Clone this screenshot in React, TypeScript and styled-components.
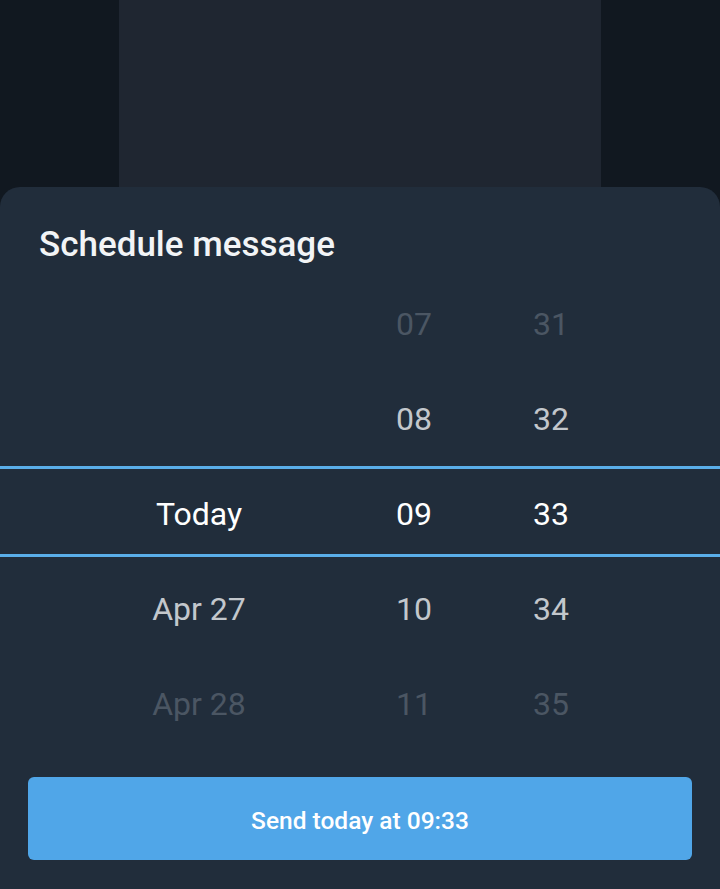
import React from 'react';
import styled, { createGlobalStyle } from 'styled-components';

const GlobalStyle = createGlobalStyle`
  html, body {
    margin: 0;
    padding: 0;
    background: #111820;
  }
  * { box-sizing: border-box; }
`;

type Tone = 'far' | 'near' | 'active';

const dates: [string, Tone][] = [
  ['', 'far'],
  ['', 'near'],
  ['Today', 'active'],
  ['Apr 27', 'near'],
  ['Apr 28', 'far'],
];
const hours: [string, Tone][] = [
  ['07', 'far'],
  ['08', 'near'],
  ['09', 'active'],
  ['10', 'near'],
  ['11', 'far'],
];
const minutes: [string, Tone][] = [
  ['31', 'far'],
  ['32', 'near'],
  ['33', 'active'],
  ['34', 'near'],
  ['35', 'far'],
];

const App: React.FC = () => {
  return (
    <Page>
      <GlobalStyle />
      <Backdrop>
        <Chat />
      </Backdrop>
      <Sheet>
        <Title>Schedule message</Title>
        <Picker>
          <Selection />
          <Column $width={398}>
            {dates.map(([t, tone], i) => (
              <Cell key={i} $tone={tone}>{t}</Cell>
            ))}
          </Column>
          <Column $width={32}>
            {hours.map(([t, tone], i) => (
              <Cell key={i} $tone={tone}>{t}</Cell>
            ))}
          </Column>
          <Column $width={242}>
            {minutes.map(([t, tone], i) => (
              <Cell key={i} $tone={tone}>{t}</Cell>
            ))}
          </Column>
        </Picker>
        <SendButton>Send today at 09:33</SendButton>
      </Sheet>
    </Page>
  );
};

export default App;

const Page = styled.div`
  width: 720px;
  height: 889px;
  display: flex;
  flex-direction: column;
  background: #111820;
  font-family: Roboto, "Liberation Sans", sans-serif;
  overflow: hidden;
`;

const Backdrop = styled.div`
  height: 187px;
  display: flex;
  justify-content: center;
  flex-shrink: 0;
`;

const Chat = styled.div`
  width: 482px;
  height: 100%;
  background: #1f2631;
`;

const Sheet = styled.div`
  flex: 1;
  background: #212d3b;
  border-radius: 20px 20px 0 0;
  padding: 0 28px 29px;
  display: flex;
  flex-direction: column;
`;

const Title = styled.div`
  color: #f2f4f6;
  font-size: 35px;
  font-weight: 500;
  height: 89px;
  padding: 38px 0 0 11px;
  line-height: 40px;
`;

const Picker = styled.div`
  position: relative;
  display: flex;
  margin: 0 -28px;
  height: 475px;
`;

const Selection = styled.div`
  position: absolute;
  left: 0;
  right: 0;
  top: 190px;
  height: 91px;
  border-top: 3px solid #5aaee9;
  border-bottom: 3px solid #5aaee9;
  pointer-events: none;
`;

const Column = styled.div<{ $width: number }>`
  width: ${p => p.$width}px;
  display: flex;
  flex-direction: column;
`;

const toneColor: Record<Tone, string> = {
  far: '#4b5663',
  near: '#c3c7cc',
  active: '#ffffff',
};

const Cell = styled.div<{ $tone: Tone }>`
  height: 95px;
  display: flex;
  align-items: center;
  justify-content: center;
  white-space: nowrap;
  font-size: 32px;
  color: ${p => toneColor[p.$tone]};
`;

const SendButton = styled.button`
  margin-top: 26px;
  height: 83px;
  flex-shrink: 0;
  padding: 3px 0 0;
  border: none;
  border-radius: 6px;
  background: #50a6e8;
  color: #ffffff;
  font-family: Roboto, "Liberation Sans", sans-serif;
  font-size: 24.5px;
  font-weight: 500;
`;
